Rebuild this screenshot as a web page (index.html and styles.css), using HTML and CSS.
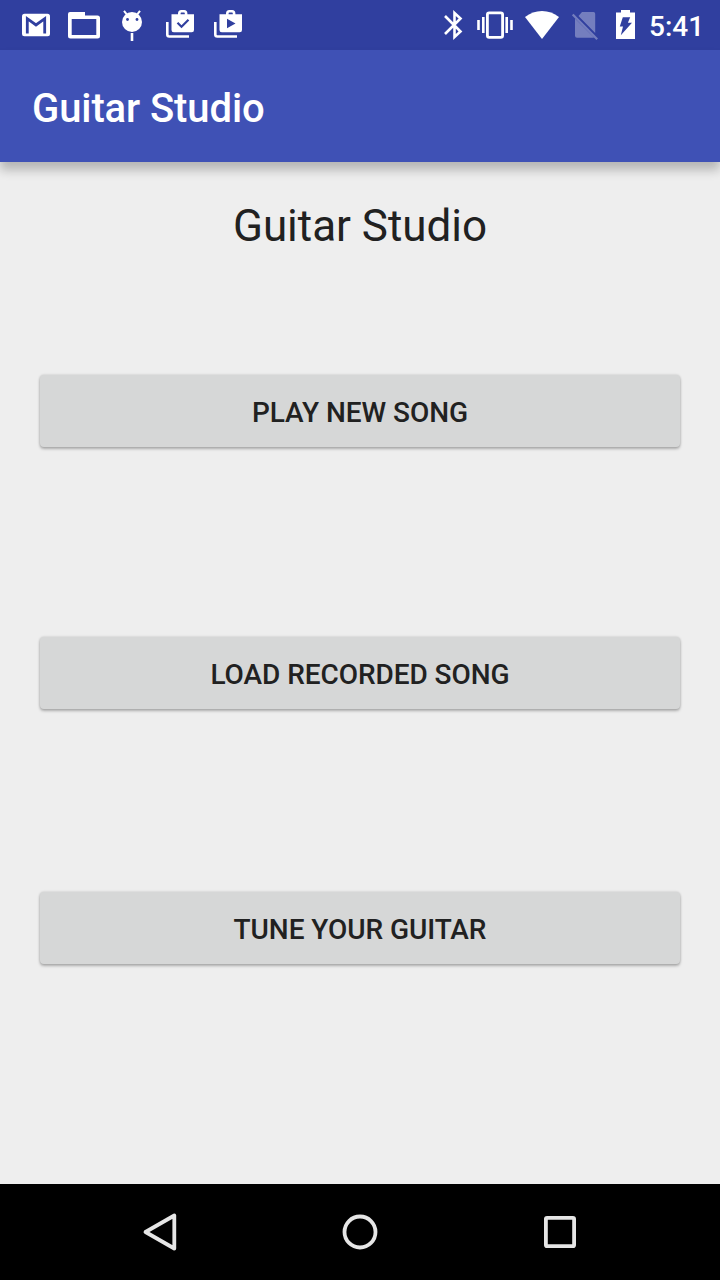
FILE: index.html
```
<!DOCTYPE html>
<html lang="en">
<head>
<meta charset="utf-8">
<title>Guitar Studio</title>
<link rel="stylesheet" href="styles.css">
</head>
<body>
<div class="screen">
  <header class="status-bar">
    <div class="notifications">
      <svg width="48" height="50" viewBox="12 0 48 50"><rect x="22" y="13.700" width="28" height="22.500" rx="2.500" fill="#fff"/><path d="M27.300 33.500V18.700L36 25L44.700 18.700V33.500" fill="none" stroke="#303f9f" stroke-width="2.800"/></svg>
      <svg width="48" height="50" viewBox="60 0 48 50"><path fill="#fff" fill-rule="evenodd" d="M70 12h15v3.500h12.500q2.500 0 2.500 2.500v18q0 2.500-2.500 2.500h-27q-2.500 0-2.500-2.500v-22q0-2 2-2zM71.700 19v16h24.600V19z"/></svg>
      <svg width="48" height="50" viewBox="108 0 48 50"><g fill="#fff"><circle cx="132" cy="22" r="10"/><path d="M124 10.800l3.500 4.500M140 10.800l-3.500 4.500" stroke="#fff" stroke-width="2"/><path d="M132 33v8" stroke="#fff" stroke-width="2.600"/></g><circle cx="127.500" cy="19.500" r="1.400" fill="#303f9f"/><circle cx="137" cy="19.500" r="1.400" fill="#303f9f"/></svg>
      <svg width="48" height="50" viewBox="156 0 48 50"><path d="M167.300 22v12.500q0 2 2 2H189M179.300 15v-1.500q0-2.200 2-2.200h2.800q2 0 2 2.200V15" fill="none" stroke="#fff" stroke-width="2.600"/><path d="M171.500 14.300H194V30q0 2.300-2.300 2.300h-17.900q-2.300 0-2.300-2.300z" fill="#fff"/><path d="M177.500 22.800l4 4 7-7" fill="none" stroke="#303f9f" stroke-width="2.200"/></svg>
      <svg width="48" height="50" viewBox="204 0 48 50"><path d="M215.300 22v12.500q0 2 2 2H237M227.300 15v-1.500q0-2.200 2-2.200h2.800q2 0 2 2.200V15" fill="none" stroke="#fff" stroke-width="2.600"/><path d="M219.500 14.300H242V30q0 2.300-2.300 2.300h-17.900q-2.300 0-2.300-2.300z" fill="#fff"/><path d="M227 18.700v9.600l8.500-4.800z" fill="#303f9f"/></svg>
    </div>
    <div class="system">
      <svg width="34" height="50" viewBox="436 0 34 50"><path d="M445 16l15.500 15.500-6 5.500V13l6 5.500L445 34" fill="none" stroke="#fff" stroke-width="2.600"/></svg>
      <svg width="49" height="50" viewBox="470 0 49 50"><rect x="487.400" y="12.800" width="15.200" height="24.600" rx="1.800" fill="none" stroke="#fff" stroke-width="2.800"/><path d="M478.500 20v10M483.300 17v16M506.700 17v16M511.500 20v10" stroke="#fff" stroke-width="2.600"/></svg>
      <svg width="46" height="50" viewBox="519 0 46 50"><path d="M525 17Q532.500 11 542 11T559 17L542 39z" fill="#fff"/></svg>
      <svg width="40" height="50" viewBox="565 0 40 50"><g fill="#fff" opacity=".33"><path d="M582 12h11.500q1.700 0 1.700 1.700V33L578.500 16zM575 18.500L594 37.500q-.5.200-1.500.200H577q-2 0-2-2z"/><path d="M573.500 13.700L598 38.400l-1.600 1.500L571.900 15.200z"/></g></svg>
      <svg width="40" height="50" viewBox="605 0 40 50"><path d="M616 12.500h5V10h9v2.500h5V39h-19z" fill="#fff"/><path d="M622.800 17.300h7.400l-2.300 5.500h4.100L620.800 35.300l2.200-8.800h-3.200z" fill="#303f9f"/></svg>
      <span class="time">5:41</span>
    </div>
  </header>
  <div class="app-bar">Guitar Studio</div>
  <main class="content">
    <h1 class="heading">Guitar Studio</h1>
    <button class="action play">PLAY NEW SONG</button>
    <button class="action load">LOAD RECORDED SONG</button>
    <button class="action tune">TUNE YOUR GUITAR</button>
  </main>
  <nav class="nav-bar">
    <svg width="40" height="40" viewBox="140 1212 40 40"><path d="M174.300 1215.500v33L145.500 1232z"/></svg>
    <svg width="40" height="40" viewBox="340 1212 40 40"><circle cx="360" cy="1232" r="15.500"/></svg>
    <svg width="40" height="40" viewBox="540 1212 40 40"><rect x="545.900" y="1217.900" width="28.200" height="28.200" rx="1.200"/></svg>
  </nav>
</div>
</body>
</html>
```
FILE: styles.css
```
body { margin: 0; }
.screen {
  width: 720px;
  height: 1280px;
  display: flex;
  flex-direction: column;
  background: #eeeeee;
  font-family: Roboto, sans-serif;
  overflow: hidden;
}
svg { display: block; flex: none; }
.status-bar {
  box-sizing: border-box;
  height: 50px;
  padding-left: 12px;
  display: flex;
  justify-content: space-between;
  background: #303f9f;
}
.notifications { display: flex; }
.system {
  display: flex;
  width: 284px;
}
.time {
  padding-left: 4px;
  color: #fff;
  font-size: 28px;
  font-weight: 500;
  line-height: 53px;
}
.app-bar {
  box-sizing: border-box;
  height: 112px;
  padding: 3px 32px 0;
  background: #3f51b5;
  color: #fff;
  font-size: 40px;
  font-weight: 500;
  letter-spacing: -0.1px;
  line-height: 112px;
  box-shadow: 0 8px 10px rgba(0, 0, 0, .24);
}
.content {
  flex: 1;
  display: flex;
  flex-direction: column;
  padding: 32px 40px 0;
}
.heading {
  margin: 0;
  text-align: center;
  color: #212121;
  font-size: 44px;
  font-weight: 400;
  letter-spacing: -0.030px;
  line-height: 64px;
}
.action {
  height: 72px;
  flex: none;
  padding: 3px 0 0;
  border: 0;
  border-radius: 4px;
  background: #d6d7d7;
  color: #212121;
  font: 500 28px/69px Roboto, sans-serif;
  letter-spacing: -0.060px;
  box-shadow: 0 2px 3px rgba(0, 0, 0, .26), 0 0 2px 1px rgba(0, 0, 0, .08);
}
.play { margin-top: 117px; }
.load { margin-top: 190px; }
.tune { margin-top: 183px; }
.nav-bar {
  height: 96px;
  display: flex;
  align-items: center;
  justify-content: center;
  gap: 160px;
  background: #000;
}
.nav-bar svg { fill: none; stroke: #e6e6e6; stroke-width: 3.800; stroke-linejoin: round; }
```
